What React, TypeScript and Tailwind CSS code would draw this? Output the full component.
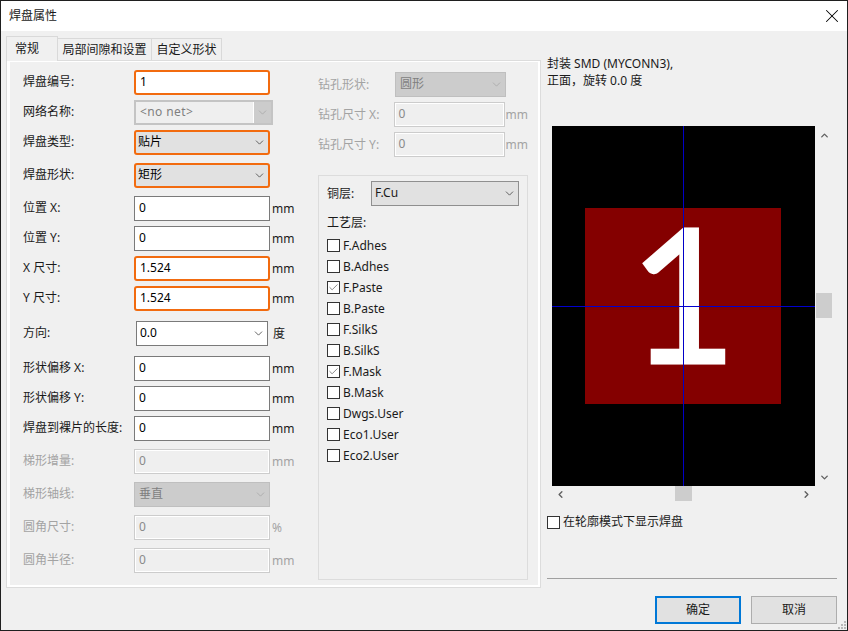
import React from "react";
import { ChevronDown, ChevronUp, ChevronLeft, ChevronRight, X, Check } from "lucide-react";

const FONT = { fontFamily: '"Noto Sans", "Noto Sans CJK SC", sans-serif' };

type RowProps = {
  label: string;
  disabled?: boolean;
  unit?: string;
  className?: string;
  children: React.ReactNode;
};

function Row({ label, disabled, unit, className = "", children }: RowProps) {
  return (
    <div className={`flex items-center h-[25px] ${className}`}>
      <span className={`w-[111px] shrink-0 whitespace-nowrap pb-px ${disabled ? "text-[#a3a3a3]" : "text-[#1a1a1a]"}`}>{label}</span>
      {children}
      {unit && <span className={`ml-[2px] ${disabled ? "text-[#a3a3a3]" : "text-[#1a1a1a]"}`}>{unit}</span>}
    </div>
  );
}

function Field({ value, hot, disabled, w = "w-[136px]" }: { value: string; hot?: boolean; disabled?: boolean; w?: string }) {
  const tone = hot
    ? "border-2 border-[#f26b0f] rounded-[3px] bg-white pl-[4px]"
    : disabled
      ? "border border-[#cccccc] bg-[#efefef] text-[#8a8a8a] pl-[4px] shadow-[inset_0_0_0_1px_#ffffff]"
      : "border border-[#7a7a7a] bg-white pl-[4px]";
  return <div className={`${w} h-[25px] shrink-0 flex items-center pb-[2px] ${tone}`}>{value}</div>;
}

function Combo({ value, hot, disabled, w = "w-[136px]" }: { value: string; hot?: boolean; disabled?: boolean; w?: string }) {
  const tone = hot
    ? "border-2 border-[#f26b0f] rounded-[3px] bg-[#e1e1e1] pl-[2px]"
    : disabled
      ? "border border-[#bfbfbf] bg-[#cccccc] text-[#7f7f7f] pl-[4px]"
      : "border border-[#7a7a7a] bg-white pl-[3px]";
  return (
    <div className={`${w} h-[25px] shrink-0 flex items-center justify-between pr-[2px] ${tone}`}>
      <span className="pb-px">{value}</span>
      <ChevronDown size={13} strokeWidth={1.5} className={disabled ? "text-[#a8a8a8]" : "text-[#444444]"} />
    </div>
  );
}

function NetCombo({ value }: { value: string }) {
  return (
    <div className="w-[139px] h-[25px] shrink-0 flex border-2 border-[#c4c4c4] bg-[#cccccc]">
      <div className="flex-1 flex items-center pl-[4px] pb-px bg-[#efefef] border-r border-white text-[#7f7f7f] tracking-[0.4px]">{value}</div>
      <div className="w-[17px] flex items-center justify-center">
        <ChevronDown size={13} strokeWidth={1.5} className="text-[#a8a8a8]" />
      </div>
    </div>
  );
}

function Layer({ name, on }: { name: string; on?: boolean }) {
  return (
    <div className="flex items-center h-[21px] text-[#1a1a1a]">
      <span className="w-[13px] h-[13px] border border-[#333333] bg-white mr-[3px] flex items-center justify-center">
        {on && <Check size={11} strokeWidth={1.5} className="text-[#555555]" />}
      </span>
      {name}
    </div>
  );
}

const layers: [string, boolean][] = [
  ["F.Adhes", false],
  ["B.Adhes", false],
  ["F.Paste", true],
  ["B.Paste", false],
  ["F.SilkS", false],
  ["B.SilkS", false],
  ["F.Mask", true],
  ["B.Mask", false],
  ["Dwgs.User", false],
  ["Eco1.User", false],
  ["Eco2.User", false],
];

export default function App() {
  return (
    <div style={FONT} className="w-[848px] h-[631px] flex flex-col border border-[#1f1f1f] bg-[#f0f0f0] text-[12px] overflow-hidden relative">
      {/* Title bar */}
      <div className="h-[30px] bg-white flex items-center justify-between shrink-0 pl-[8px] pr-[4px]">
        <span className="text-[12px] text-[#1a1a1a]">焊盘属性</span>
        <X size={22} strokeWidth={1.1} className="text-black" />
      </div>

      <div className="flex flex-1 pl-[5px]">
        {/* Notebook */}
        <div className="w-[535px] shrink-0 pt-[5px]">
          <div className="flex items-end h-[24px] relative z-10 text-[#1a1a1a]">
            <div className="h-[25px] w-[52px] -mb-px bg-[#f0f0f0] border border-[#d9d9d9] border-b-0 pl-[8px] pt-[3px]">常规</div>
            <div className="h-[22px] w-[94px] bg-[#f0f0f0] border border-l-0 border-[#d9d9d9] border-b-0 flex items-center justify-center">局部间隙和设置</div>
            <div className="h-[22px] w-[70px] bg-[#f0f0f0] border border-l-0 border-[#d9d9d9] border-b-0 flex items-center justify-center">自定义形状</div>
          </div>
          <div className="h-[528px] border border-[#dcdcdc]">
            <div className="h-full border-l-[3px] border-r-2 border-b-2 border-t border-white bg-[#f0f0f0] flex pl-[13px] pt-[8px]">
              {/* Left column */}
              <div className="w-[295px] shrink-0">
                <Row label="焊盘编号:"><Field value="1" hot /></Row>
                <Row label="网络名称:" className="mt-[5px]"><NetCombo value="<no net>" /></Row>
                <Row label="焊盘类型:" className="mt-[5px]"><Combo value="贴片" hot /></Row>
                <Row label="焊盘形状:" className="mt-[8px]"><Combo value="矩形" hot /></Row>
                <Row label="位置 X:" unit="mm" className="mt-[8px]"><Field value="0" /></Row>
                <Row label="位置 Y:" unit="mm" className="mt-[5px]"><Field value="0" /></Row>
                <Row label="X 尺寸:" unit="mm" className="mt-[5px]"><Field value="1.524" hot /></Row>
                <Row label="Y 尺寸:" unit="mm" className="mt-[5px]"><Field value="1.524" hot /></Row>
                <Row label="方向:" unit="度" className="mt-[10px]"><Combo value="0.0" w="w-[132px] ml-[2px] mr-[3px]" /></Row>
                <Row label="形状偏移 X:" unit="mm" className="mt-[10px]"><Field value="0" /></Row>
                <Row label="形状偏移 Y:" unit="mm" className="mt-[5px]"><Field value="0" /></Row>
                <Row label="焊盘到裸片的长度:" unit="mm" className="mt-[5px]"><Field value="0" /></Row>
                <Row label="梯形增量:" unit="mm" disabled className="mt-[8px]"><Field value="0" disabled /></Row>
                <Row label="梯形轴线:" disabled className="mt-[8px]"><Combo value="垂直" disabled /></Row>
                <Row label="圆角尺寸:" unit="%" disabled className="mt-[8px]"><Field value="0" disabled /></Row>
                <Row label="圆角半径:" unit="mm" disabled className="mt-[8px]"><Field value="0" disabled /></Row>
              </div>

              {/* Right column */}
              <div className="w-[210px] shrink-0 flex flex-col pt-[2px]">
                <div className="flex items-center h-[25px] text-[#a3a3a3]">
                  <span className="w-[77px]">钻孔形状:</span>
                  <Combo value="圆形" disabled w="w-[111px]" />
                </div>
                <div className="flex items-center h-[25px] mt-[5px] text-[#a3a3a3]">
                  <span className="w-[77px] whitespace-nowrap">钻孔尺寸 X:</span>
                  <Field value="0" disabled w="w-[111px]" />
                  <span className="ml-px">mm</span>
                </div>
                <div className="flex items-center h-[25px] mt-[5px] text-[#a3a3a3]">
                  <span className="w-[77px] whitespace-nowrap">钻孔尺寸 Y:</span>
                  <Field value="0" disabled w="w-[111px]" />
                  <span className="ml-px">mm</span>
                </div>
                <div className="mt-[18px] w-[210px] h-[405px] border border-[#dcdcdc] pl-[8px] pt-[5px]">
                  <div className="flex items-center h-[25px] text-[#1a1a1a]">
                    <span className="w-[44px]">铜层:</span>
                    <Combo value="F.Cu" w="w-[148px] !bg-[#e1e1e1] !border-[#8f8f8f]" />
                  </div>
                  <div className="h-[16px] mt-[9px] mb-[4px] flex items-center text-[#1a1a1a]">工艺层:</div>
                  {layers.map(([name, on]) => (
                    <Layer key={name} name={name} on={on} />
                  ))}
                </div>
              </div>
            </div>
          </div>
        </div>

        {/* Preview side */}
        <div className="flex-1 pl-[6px] pt-[24px] relative text-[#1a1a1a]">
          <div className="leading-[17px]">
            <div>封装 SMD (MYCONN3),</div>
            <div>{"正面\uFF0C旋转 0.0 度"}</div>
          </div>
          <div className="mt-[37px] ml-[5px] flex">
            <div className="w-[263px] h-[360px] bg-black relative flex items-center justify-center overflow-hidden">
              <div className="w-[196px] h-[196px] mr-px bg-[#840000] flex items-center justify-center">
                <span className="text-white text-[186px] leading-none -translate-y-[15px] [-webkit-text-stroke:3px_#ffffff]" style={{ fontFamily: "Lato, sans-serif" }}>1</span>
              </div>
              <div className="absolute left-0 right-0 top-[180px] h-px bg-[#0000d0]" />
              <div className="absolute top-0 bottom-0 left-[131px] w-px bg-[#0000c8]" />
            </div>
            <div className="w-[16px] h-[360px] flex flex-col items-center justify-between relative ml-px">
              <ChevronUp size={11} strokeWidth={3} className="text-[#606060] mt-[4px]" />
              <div className="absolute top-[167px] left-0 w-[16px] h-[25px] bg-[#cdcdcd]" />
              <ChevronDown size={11} strokeWidth={3} className="text-[#606060] mb-[3px]" />
            </div>
          </div>
          <div className="ml-[5px] w-[263px] h-[16px] flex items-center justify-between relative px-[3px]">
            <ChevronLeft size={11} strokeWidth={3} className="text-[#606060]" />
            <div className="absolute left-[123px] top-0 w-[17px] h-[15px] bg-[#cdcdcd]" />
            <ChevronRight size={11} strokeWidth={3} className="text-[#606060]" />
          </div>
          <div className="flex items-center mt-[12px] h-[16px]">
            <span className="w-[13px] h-[13px] border border-[#333333] bg-white mr-[3px]" />
            在轮廓模式下显示焊盘
          </div>
          <div className="mt-[48px] w-[290px] h-px bg-[#a0a0a0]" />
          <div className="mt-[17px] flex gap-[10px] pl-[108px]">
            <button className="w-[86px] h-[28px] border-2 border-[#0078d7] bg-[#e1e1e1]">确定</button>
            <button className="w-[86px] h-[28px] border border-[#adadad] bg-[#e1e1e1]">取消</button>
          </div>
        </div>
      </div>

      {/* Resize grip */}
      <svg className="absolute right-0 bottom-0" width="9" height="10" viewBox="0 0 9 10" fill="#b8b8b8">
        <rect x="6" y="1" width="2" height="2" />
        <rect x="3" y="4" width="2" height="2" />
        <rect x="6" y="4" width="2" height="2" />
        <rect x="0" y="7" width="2" height="2" />
        <rect x="3" y="7" width="2" height="2" />
        <rect x="6" y="7" width="2" height="2" />
      </svg>
    </div>
  );
}
